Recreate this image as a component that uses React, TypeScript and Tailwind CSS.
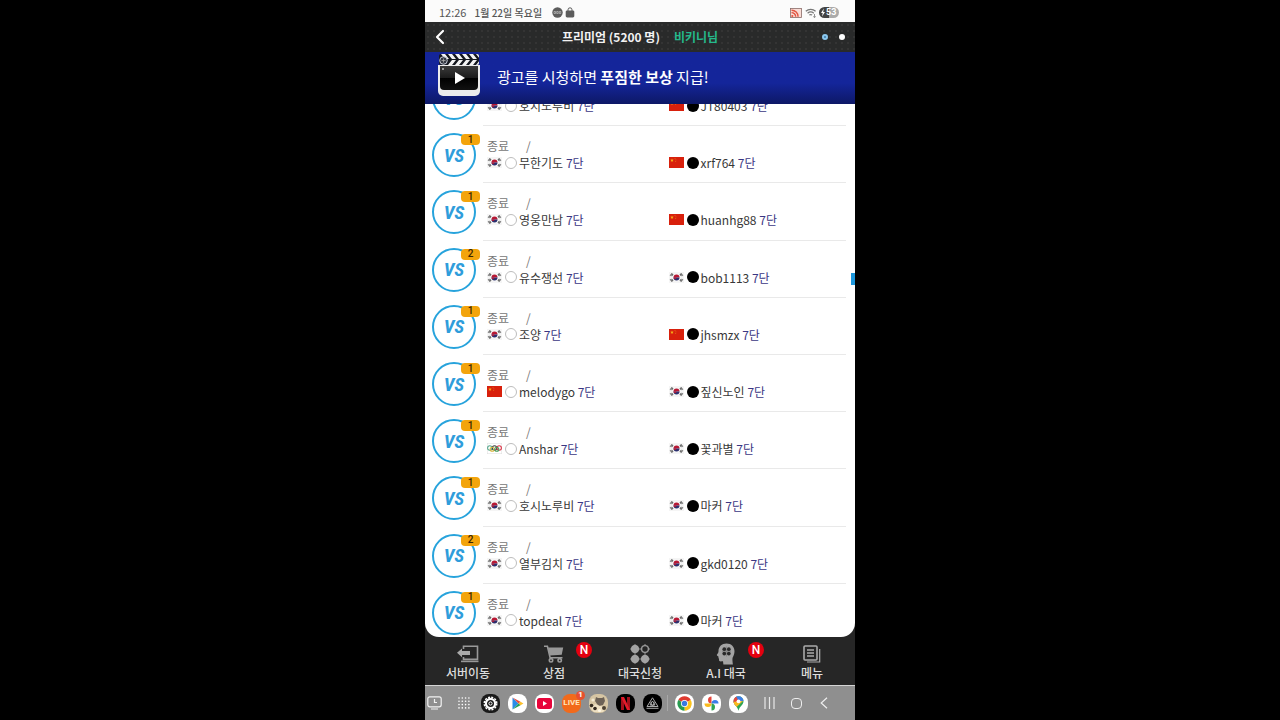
import type { ReactNode } from "react";
import { ChevronLeft } from "lucide-react";
import clsx from "clsx";

type Country = "kr" | "cn" | "olympic";

interface Player {
  name: string;
  country: Country;
}

interface Match {
  games: number;
  white: Player;
  black: Player;
}

const matches: Match[] = [
  { games: 1, white: { name: "호시노루비", country: "kr" }, black: { name: "JT80403", country: "cn" } },
  { games: 1, white: { name: "무한기도", country: "kr" }, black: { name: "xrf764", country: "cn" } },
  { games: 1, white: { name: "영웅만남", country: "kr" }, black: { name: "huanhg88", country: "cn" } },
  { games: 2, white: { name: "유수쟁선", country: "kr" }, black: { name: "bob1113", country: "kr" } },
  { games: 1, white: { name: "조양", country: "kr" }, black: { name: "jhsmzx", country: "cn" } },
  { games: 1, white: { name: "melodygo", country: "cn" }, black: { name: "짚신노인", country: "kr" } },
  { games: 1, white: { name: "Anshar", country: "olympic" }, black: { name: "꽃과별", country: "kr" } },
  { games: 1, white: { name: "호시노루비", country: "kr" }, black: { name: "마커", country: "kr" } },
  { games: 2, white: { name: "열부김치", country: "kr" }, black: { name: "gkd0120", country: "kr" } },
  { games: 1, white: { name: "topdeal", country: "kr" }, black: { name: "마커", country: "kr" } },
];

const Flag = ({ country }: { country: Country }) => {
  if (country === "cn") {
    return (
      <svg width="15" height="11" viewBox="0 0 15 11" className="shrink-0">
        <rect width="15" height="11" fill="#d8200c" />
        <path d="M3 1.4l.5 1.3h1.3l-1 .9.4 1.3L3 4.1l-1.2.8.4-1.3-1-.9h1.3z" fill="#f6b21a" />
        <path d="M5.6 1h.8v.8h-.8zM6.5 2.4h.8v.8h-.8zM6.3 4h.8v.8h-.8z" fill="#e8801a" />
      </svg>
    );
  }
  if (country === "olympic") {
    return (
      <svg width="15" height="11" viewBox="0 0 15 11" className="shrink-0">
        <rect x=".25" y=".25" width="14.5" height="10.5" fill="#fff" stroke="#ddd" strokeWidth=".5" />
        <g fill="none" strokeWidth="1.1">
          <circle cx="2.8" cy="5" r="2.2" stroke="#5aa88f" />
          <circle cx="7.5" cy="5" r="2.2" stroke="#444" />
          <circle cx="12.2" cy="5" r="2.2" stroke="#d9384a" />
          <circle cx="5.2" cy="6.2" r="2" stroke="#d8b640" />
          <circle cx="9.8" cy="6.2" r="2" stroke="#4a9d5e" />
        </g>
      </svg>
    );
  }
  return (
    <svg width="15" height="11" viewBox="0 0 15 11" className="shrink-0">
      <rect width="15" height="11" fill="#f5f5f5" />
      <path d="M4.5 5.5a3 3 0 0 1 6 0z" fill="#b81733" />
      <path d="M4.5 5.5a3 3 0 0 0 6 0z" fill="#2b2f6e" />
      <path d="M4.5 5.5a1.5 1.5 0 0 0 3 0z" fill="#b81733" />
      <path
        d="M1.3 3.6l1.8-2.4M2.6 4.1l1.4-2M1.3 7.4l1.8 2.4M2.6 6.9l1.4 2M13.7 3.6l-1.8-2.4M12.4 4.1l-1.4-2M13.7 7.4l-1.8 2.4M12.4 6.9l-1.4 2"
        stroke="#333"
        strokeWidth="1"
      />
    </svg>
  );
};

const PlayerLabel = ({ player, stone }: { player: Player; stone: "white" | "black" }) => (
  <div className="flex items-center whitespace-nowrap">
    <Flag country={player.country} />
    <span
      className={clsx(
        "ml-[3px] mr-[2px] size-3 shrink-0 rounded-full",
        stone === "black" ? "bg-black" : "border border-[#bdbdbd] bg-white"
      )}
    />
    <span className="text-[#383838]">
      {player.name} <span className="text-[#3b3784]">7단</span>
    </span>
  </div>
);

const MatchRow = ({ match }: { match: Match }) => (
  <li className="flex min-h-0 pl-[7px] pr-[9px]">
    <div className="relative mt-[7px] flex size-11 shrink-0 items-center justify-center rounded-full border-2 border-[#27a3dc]">
      <span className="font-['Roboto_Condensed','Roboto',sans-serif] text-[19px] font-bold italic leading-none text-[#2f9ddb]">
        VS
      </span>
      <span className="absolute -right-[6px] -top-[1px] flex h-[11px] w-[19px] items-center justify-center rounded-[4px] bg-[#f3a40c] font-['Roboto'] text-[10px] font-medium leading-none text-[#3a2500]">
        {match.games}
      </span>
    </div>
    <div className="ml-[7px] grid flex-1 grid-cols-2 content-start border-b border-[#e9e9e9] pl-1 pt-[11px] text-[12px] leading-[17px]">
      <div className="col-span-2 flex text-[#777]">
        <span className="w-[39px]">종료</span>
        <span>/</span>
      </div>
      <PlayerLabel player={match.white} stone="white" />
      <div className="pl-[2px]">
        <PlayerLabel player={match.black} stone="black" />
      </div>
    </div>
  </li>
);

const StatusBar = () => (
  <div className="flex h-[22px] shrink-0 items-center bg-[#fbfbfb] pl-[14px] pr-4 pt-[3px] text-[11px] text-[#555]">
    <time>12:26</time>
    <span className="ml-2 text-[10px] font-medium">1월 22일 목요일</span>
    <svg width="11" height="11" viewBox="0 0 11 11" className="ml-[10px]">
      <circle cx="5.5" cy="5.5" r="5.2" fill="#5c5c5c" />
      <path d="M2 4.5h1.5v2H2zM4.7 4.5h1.5v2H4.7zM7.3 4.5h1.5v2H7.3z" fill="none" stroke="#ccc" strokeWidth=".6" />
    </svg>
    <svg width="10" height="11" viewBox="0 0 10 11" className="ml-[2px]">
      <path d="M3 4V2.8a2 2 0 0 1 4 0V4" fill="none" stroke="#5c5c5c" strokeWidth="1" />
      <rect x=".7" y="3.4" width="8.6" height="7" rx="1.4" fill="#5c5c5c" />
    </svg>
    <svg width="12" height="10" viewBox="0 0 12 10" className="ml-auto">
      <rect x=".5" y=".5" width="11" height="9" fill="#f9ddd7" stroke="#8b6c68" strokeWidth=".8" />
      <path d="M1.5 2.2a6.5 6.5 0 0 1 6.6 6.6M1.5 4.6a4.2 4.2 0 0 1 4.2 4.2" fill="none" stroke="#e25440" strokeWidth="1.4" />
      <circle cx="2.3" cy="8" r="1.1" fill="#e25440" />
    </svg>
    <svg width="12" height="10" viewBox="0 0 12 10" className="ml-[3px]" fill="none" stroke="#777" strokeWidth="1.2">
      <path d="M.8 3.2a7.4 7.4 0 0 1 9.8 0M2.6 5.2a4.8 4.8 0 0 1 6.2 0M4.3 7.1a2.4 2.4 0 0 1 2.8 0" />
      <path d="M9.5 6v3.5M8.2 8.4l1.3 1.2 1.3-1.2" strokeWidth=".8" />
    </svg>
    <div className="ml-[2px] flex h-[11px] w-[20px] items-center rounded-full bg-gradient-to-r from-[#444] from-50% to-[#aaa] to-50% pl-[1px] font-['Roboto'] text-[9px] font-bold leading-none text-white">
      <svg width="6" height="9" viewBox="0 0 6 9">
        <path d="M3.8.5L1 5h1.7L2 8.5 5 4H3.2z" fill="#fff" />
      </svg>
      53
    </div>
  </div>
);

const Header = () => (
  <header className="flex h-[30px] shrink-0 items-center bg-[#292a2a] bg-[radial-gradient(#343434_1px,transparent_1px)] bg-[size:6px_6px] px-[5px]">
    <button type="button" aria-label="뒤로" className="w-[60px]">
      <ChevronLeft size={24} strokeWidth={2.2} color="#fff" className="-ml-[2px]" />
    </button>
    <h1 className="flex flex-1 justify-center gap-[14px] text-[12px] font-bold text-[#f2f2f2]">
      <span>프리미엄 (5200 명)</span>
      <span className="text-[#25b98c]">비키니님</span>
    </h1>
    <div className="flex w-[60px] justify-end gap-[11px] pr-[5px]">
      <span className="size-[6px] rounded-full border-2 border-[#8cc8ee] bg-[#3a78a8]" />
      <span className="size-[6px] rounded-full bg-white" />
    </div>
  </header>
);

const ClapperIcon = () => (
  <svg width="42" height="43" viewBox="0 0 42 43" className="shrink-0">
    <defs>
      <linearGradient id="screen" x1="0" y1="0" x2="0" y2="1">
        <stop offset="0" stopColor="#3a3a3a" />
        <stop offset=".48" stopColor="#1c1c1c" />
        <stop offset=".5" stopColor="#000" />
        <stop offset="1" stopColor="#111" />
      </linearGradient>
      <clipPath id="bar">
        <rect x="1" y="0" width="40" height="11" rx="2" />
      </clipPath>
    </defs>
    <g clipPath="url(#bar)">
      <rect width="42" height="11" fill="#15181f" />
      <path
        d="M3 0h4l4 5h-4zM10 0h4l4 5h-4zM17 0h4l4 5h-4zM24 0h4l4 5h-4zM31 0h4l4 5h-4zM38 0h4v5z"
        fill="#f4f4f4"
      />
      <path
        d="M14 6h4l-4 5h-4zM21 6h4l-4 5h-4zM28 6h4l-4 5h-4zM35 6h4l-4 5h-4zM42 6v5h-4z"
        fill="#f4f4f4"
      />
      <circle cx="5.5" cy="6.5" r="3.8" fill="#363a44" stroke="#c7ccd8" strokeWidth="1" />
      <path d="M3.5 6.5h4M5.5 4.5v4" stroke="#aaa" strokeWidth=".8" />
    </g>
    <path d="M0 11h42v26a5 5 0 0 1-5 5H5a5 5 0 0 1-5-5z" fill="#ececec" />
    <path d="M2 12h38v20a4 4 0 0 1-4 4H6a4 4 0 0 1-4-4z" fill="url(#screen)" />
    <path d="M17 18l10 6-10 6z" fill="#fff" />
    <circle cx="5" cy="15" r="1" fill="#bbb" />
  </svg>
);

const AdBanner = () => (
  <button
    type="button"
    className="flex h-[52px] shrink-0 items-center bg-gradient-to-b from-[#14259a] from-60% to-[#0d1866] pb-[5px] pl-[13px] text-left text-[15px] text-white"
  >
    <ClapperIcon />
    <span className="ml-[17px] pt-1">
      광고를 시청하면 <b>푸짐한 보상</b> 지급!
    </span>
  </button>
);

const ServerIcon = () => (
  <svg width="22" height="18" viewBox="0 0 22 18">
    <path d="M6.5 4V1.2h14v13.2h-14V12" fill="none" stroke="#999" strokeWidth="1.6" />
    <path d="M0 7.8L5 3.6v2.3h8v4H5v2.3z" fill="#aaa" />
    <path d="M4 16.4h17.5" stroke="#999" strokeWidth="1.6" />
  </svg>
);

const CartIcon = () => (
  <svg width="20" height="18" viewBox="0 0 20 18" fill="none" stroke="#999" strokeWidth="1.6">
    <path d="M4 2.5h15.2l-1.5 7.2-12 .8z" fill="#999" stroke="none" />
    <path d="M0 1.2h3.4l2.7 11.6h12.4" />
    <circle cx="7" cy="15.3" r="1.7" />
    <circle cx="15.7" cy="15.3" r="1.7" />
  </svg>
);

const StonesIcon = () => (
  <svg width="20" height="20" viewBox="0 0 20 20">
    <g fill="#a3a3a3">
      <path d="M5 .3L8 2 9.7 5 8 8 5 9.7 2 8 .3 5 2 2z" />
      <path d="M5 10.3L8 12l1.7 3L8 18l-3 1.7L2 18 .3 15 2 12z" />
      <path d="M15 10.3l3 1.7 1.7 3-1.7 3-3 1.7-3-1.7-1.7-3 1.7-3z" />
    </g>
    <circle cx="15" cy="5" r="3.4" fill="none" stroke="#999" strokeWidth="1.4" />
    <path d="M15 0v2M15 8v2M10 5h2M18 5h2" stroke="#999" />
  </svg>
);

const AiHeadIcon = () => (
  <svg width="20" height="22" viewBox="0 0 20 22">
    <path
      d="M10.5.5c5 0 8 3.4 8 7.8 0 3.2-1.2 4.6-1.9 6.5-.4 1.5 0 4.5.3 6.700H7.4l-.4-3.3c-1.5.2-3.3.4-3.8-.4-.4-.8.1-1.7-.4-2.4-.3-.5-.5-.9-.2-1.6L1 12.4c-.4-.5.1-1 .5-1.6.7-1 1-1.7 1-2.9C2.6 3.6 5.7.5 10.5.5z"
      fill="#a3a3a3"
    />
    <g fill="#292929">
      <circle cx="8.3" cy="6.2" r="1.9" />
      <circle cx="12.8" cy="6.2" r="1.9" />
      <circle cx="8.3" cy="10.6" r="1.9" />
      <circle cx="12.8" cy="10.6" r="1.9" />
    </g>
    <path d="M10.5 3.5v10M6 8.4h9" stroke="#777" strokeWidth=".6" />
  </svg>
);

const MenuIcon = () => (
  <svg width="18" height="18" viewBox="0 0 18 18" fill="none" stroke="#aaa">
    <rect x="1" y="1" width="13" height="14" rx="1" strokeWidth="1.6" />
    <path d="M4 5h7M4 8h7M4 11h7" strokeWidth="1.4" />
    <path d="M4 17h12.7V4" strokeWidth="1.2" />
  </svg>
);

const navItems: { label: string; icon: ReactNode; isNew?: boolean }[] = [
  { label: "서버이동", icon: <ServerIcon /> },
  { label: "상점", icon: <CartIcon />, isNew: true },
  { label: "대국신청", icon: <StonesIcon /> },
  { label: "A.I 대국", icon: <AiHeadIcon />, isNew: true },
  { label: "메뉴", icon: <MenuIcon /> },
];

const BottomNav = () => (
  <nav className="grid h-12 shrink-0 grid-cols-5">
    {navItems.map((item) => (
      <button key={item.label} type="button" className="flex flex-col items-center pt-[6px] text-[12px] font-medium text-[#ddd]">
        <span className="relative flex h-[22px] items-center">
          {item.icon}
          {item.isNew && (
            <span className="absolute left-8 -top-[1px] flex size-4 items-center justify-center rounded-full bg-[#e3000f] font-['Roboto'] text-[12px] font-medium leading-none text-white">
              N
            </span>
          )}
        </span>
        <span className="leading-4">{item.label}</span>
      </button>
    ))}
  </nav>
);

const AppTile = ({ className, children }: { className: string; children: ReactNode }) => (
  <span className={clsx("relative flex size-[19px] items-center justify-center rounded-[8px]", className)}>{children}</span>
);

const apps: { label: string; tile: ReactNode }[] = [
  {
    label: "앱스",
    tile: (
      <svg width="12" height="12" viewBox="0 0 12 12" stroke="#fff" strokeWidth="1.6" strokeLinecap="round" strokeDasharray="0 3.3">
        <path d="M1 1h10.1M1 4.3h10.1M1 7.6h10.1M1 10.9h10.1" />
      </svg>
    ),
  },
  {
    label: "설정",
    tile: (
      <AppTile className="bg-[#1a1a1a]">
        <svg width="15" height="15" viewBox="0 0 15 15" fill="none" stroke="#fff">
          <circle cx="7.5" cy="7.5" r="6.3" strokeWidth="1.4" strokeDasharray="2 1.3" />
          <circle cx="7.5" cy="7.5" r="4.6" strokeWidth="2.2" />
          <circle cx="7.5" cy="7.5" r="1.6" strokeWidth="1" />
        </svg>
      </AppTile>
    ),
  },
  {
    label: "Play 스토어",
    tile: (
      <AppTile className="bg-white">
        <svg width="13" height="13" viewBox="0 0 13 13">
          <path d="M1.5.5v12l6-6z" fill="#2a8ee8" />
          <path d="M1.5.5l8 4.2-2 1.8z" fill="#e94b3c" />
          <path d="M9.5 4.7L12.5 6.5l-3 1.8-2-1.8z" fill="#fbc02d" />
          <path d="M1.5 12.5l8-4.2-2-1.8z" fill="#24a058" />
        </svg>
      </AppTile>
    ),
  },
  {
    label: "YouTube",
    tile: (
      <AppTile className="bg-white">
        <svg width="15" height="11" viewBox="0 0 15 11">
          <rect width="15" height="11" rx="2.5" fill="#e8043a" />
          <path d="M6 3l4 2.5L6 8z" fill="#fff" />
        </svg>
      </AppTile>
    ),
  },
  {
    label: "라이브",
    tile: (
      <AppTile className="bg-[#f26a1b] font-['Roboto'] text-[8px] font-bold leading-none text-[#ffe6bd]">
        LIVE
        <span className="absolute -right-[4px] -top-[3px] flex size-[9px] items-center justify-center rounded-full bg-[#e8502e] text-[8px] text-white">
          1
        </span>
      </AppTile>
    ),
  },
  {
    label: "바둑",
    tile: (
      <AppTile className="overflow-hidden bg-[#d6c5a3]">
        <svg width="19" height="19" viewBox="0 0 19 19">
          <path d="M7 3l2 1h4l2-1 1 4-2 4-4 1-2-2-2-3z" fill="#6d6257" />
          <path d="M2 15l4-5 5 2 6 1-3 5H5z" fill="#eee0c3" />
          <circle cx="2.5" cy="11.5" r="1.8" fill="#33291f" />
          <circle cx="6" cy="14.5" r="1.8" fill="#33291f" />
          <circle cx="4" cy="6" r="1.6" fill="#f2e9d2" />
          <circle cx="15" cy="14" r="2" fill="#4b4032" />
          <circle cx="10.5" cy="16.5" r="1.5" fill="#fff8e7" />
        </svg>
      </AppTile>
    ),
  },
  {
    label: "넷플릭스",
    tile: (
      <AppTile className="bg-black">
        <svg width="9" height="13" viewBox="0 0 9 13">
          <path d="M0 0h3v13H0zM6 0h3v13H6z" fill="#a3101c" />
          <path d="M0 0h3l6 13H6z" fill="#e31b2b" />
        </svg>
      </AppTile>
    ),
  },
  {
    label: "피라미드",
    tile: (
      <AppTile className="bg-black">
        <svg width="13" height="12" viewBox="0 0 13 12" fill="none" stroke="#aaa" strokeWidth="1">
          <path d="M6.5.8L12 9.5H1zM6.5 4L9 8H4zM4.5 5.5L6.5 9.3l2-3.8M.5 11.3h12" />
        </svg>
      </AppTile>
    ),
  },
];

const googleApps: { label: string; tile: ReactNode }[] = [
  {
    label: "Chrome",
    tile: (
      <AppTile className="bg-white">
        <svg width="15" height="15" viewBox="0 0 15 15">
          <path d="M7.5 7.5L1.3 4A7.2 7.2 0 0 1 13.8 4z" fill="#df3b30" />
          <path d="M7.5 7.5L13.8 4A7.2 7.2 0 0 1 7.5 14.7z" fill="#fbc31b" />
          <path d="M7.5 7.5V14.7A7.2 7.2 0 0 1 1.3 4z" fill="#269b4f" />
          <circle cx="7.5" cy="7.5" r="3.5" fill="#fff" />
          <circle cx="7.5" cy="7.5" r="2.7" fill="#3a78e0" />
        </svg>
      </AppTile>
    ),
  },
  {
    label: "포토",
    tile: (
      <AppTile className="bg-white">
        <svg width="15" height="15" viewBox="0 0 15 15">
          <path d="M7.5 7.5V.5a3.5 3.5 0 0 0 0 7z" fill="#e5443a" />
          <path d="M7.5 7.5h7a3.5 3.5 0 0 0-7 0z" fill="#3b7de8" />
          <path d="M7.5 7.5v7a3.5 3.5 0 0 0 0-7z" fill="#2fa556" />
          <path d="M7.5 7.5h-7a3.5 3.5 0 0 0 7 0z" fill="#f9b91d" />
        </svg>
      </AppTile>
    ),
  },
  {
    label: "지도",
    tile: (
      <AppTile className="bg-white">
        <svg width="11" height="15" viewBox="0 0 11 15">
          <defs>
            <clipPath id="pin">
              <path d="M5.5.3a5 5 0 0 1 5 5c0 3.7-4 5-5 9.4-1-4.4-5-5.7-5-9.4a5 5 0 0 1 5-5z" />
            </clipPath>
          </defs>
          <g clipPath="url(#pin)">
            <rect width="11" height="15" fill="#2da457" />
            <path d="M0 0h11v5L5.5 5.3z" fill="#3c7de6" />
            <path d="M0 0h3l2.5 5.3L1 9H0z" fill="#e4483c" />
            <path d="M0 6l5.5-.7L10 5 3 11.5z" fill="#f9bb20" />
          </g>
          <circle cx="5.5" cy="5.3" r="1.9" fill="#fff" />
        </svg>
      </AppTile>
    ),
  },
];

const systemKeys: { label: string; tile: ReactNode }[] = [
  {
    label: "최근 앱",
    tile: (
      <svg width="11" height="12" viewBox="0 0 11 12" stroke="#e8e8e8" strokeWidth="1.2">
        <path d="M1 0v12M5.5 0v12M10 0v12" />
      </svg>
    ),
  },
  {
    label: "홈",
    tile: <span className="size-[11px] rounded-[4px] border border-[#eee]" />,
  },
  {
    label: "이전",
    tile: (
      <svg width="8" height="12" viewBox="0 0 8 12" fill="none" stroke="#eee" strokeWidth="1.2">
        <path d="M7 .8L1.2 6 7 11.2" />
      </svg>
    ),
  },
];

const TaskbarGroup = ({ items }: { items: { label: string; tile: ReactNode }[] }) => (
  <div className="flex">
    {items.map((item) => (
      <button key={item.label} type="button" aria-label={item.label} className="flex h-8 w-[27px] items-center justify-center">
        {item.tile}
      </button>
    ))}
  </div>
);

const Taskbar = () => (
  <div className="flex h-[35px] shrink-0 items-center border-t border-[#d5d5d5] bg-[#8f8f8f]">
    <button type="button" aria-label="화면" className="flex h-8 w-[25px] items-center pl-[2px]">
      <svg width="15" height="14" viewBox="0 0 15 14" fill="none" stroke="#f2f2f2" strokeWidth="1.2">
        <rect x=".8" y=".8" width="13.4" height="10" rx="2" />
        <path d="M7.5 3v3.5H10M4 13h7" />
      </svg>
    </button>
    <TaskbarGroup items={apps} />
    <span className="ml-[1px] mr-[3px] h-4 w-px bg-[#a8a8a8]" />
    <TaskbarGroup items={googleApps} />
    <div className="ml-1">
      <TaskbarGroup items={systemKeys} />
    </div>
  </div>
);

const App = () => (
  <div className="flex min-h-screen justify-center bg-black font-['Noto_Sans_CJK_KR',sans-serif]">
    <main className="flex h-screen w-full max-w-[430px] flex-col bg-[#262626]">
      <StatusBar />
      <Header />
      <AdBanner />
      <section className="relative flex min-h-0 flex-1 overflow-hidden rounded-b-[14px] bg-white">
        {/* scrolled part way into the first match */}
        <ul className="-mb-1 -mt-[35px] grid flex-1 auto-rows-fr">
          {matches.map((match, i) => (
            <MatchRow key={i} match={match} />
          ))}
        </ul>
        <span className="absolute right-0 top-[169px] h-3 w-1 bg-[#1c97dc]" />
      </section>
      <BottomNav />
      <Taskbar />
    </main>
  </div>
);

export default App;
